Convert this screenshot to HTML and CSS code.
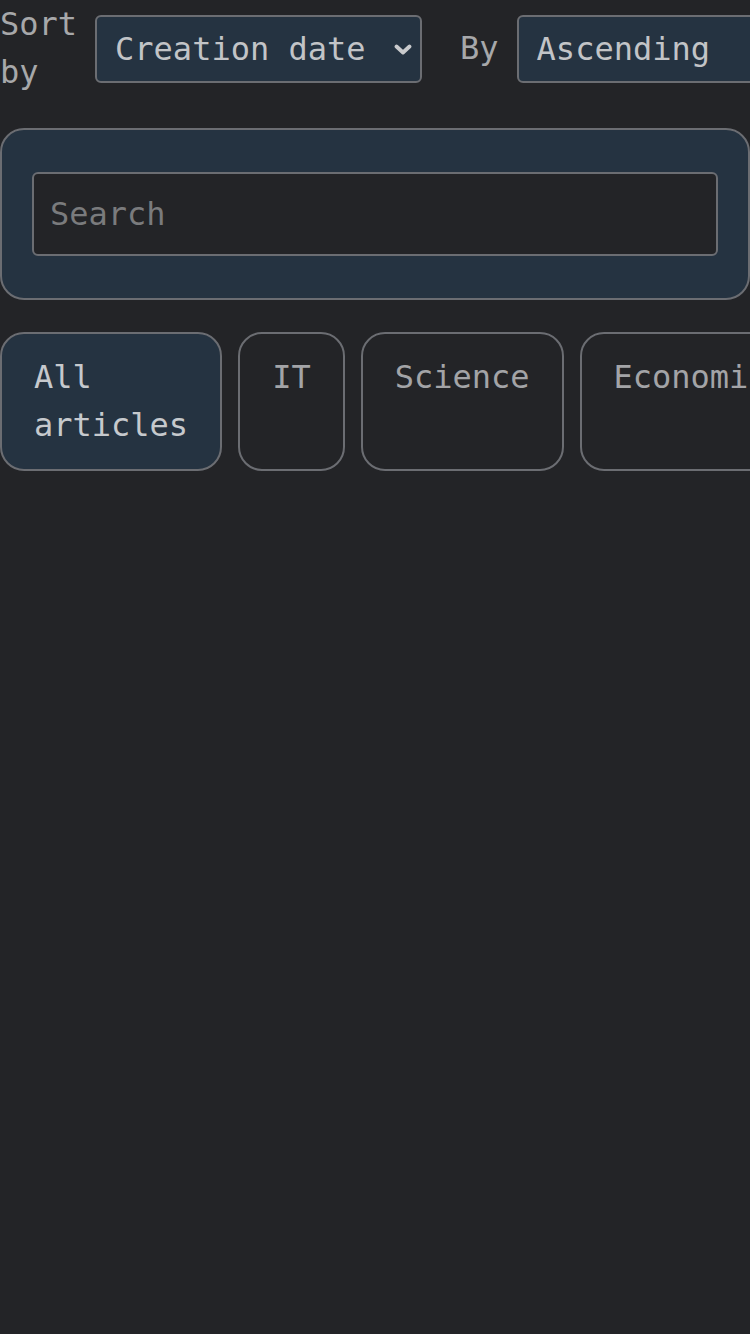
FILE: index.html
```html
<!DOCTYPE html>
<html lang="en">
<head>
<meta charset="utf-8">
<title>Articles</title>
<link rel="stylesheet" href="styles.css">
</head>
<body>
<main class="page">
  <div class="sort-row">
    <span class="sort-label">Sort by</span>
    <div class="select select-field">
      <span class="select-text">Creation date</span>
      <svg class="chevron" width="18" height="11" viewBox="0 0 18 11"><polyline points="2.5,2.5 9,8.5 15.5,2.5" fill="none" stroke="#c9cacc" stroke-width="3.8" stroke-linecap="round" stroke-linejoin="round"/></svg>
    </div>
    <span class="sort-label by-label">By</span>
    <div class="select select-order">
      <span class="select-text">Ascending</span>
      <svg class="chevron" width="18" height="11" viewBox="0 0 18 11"><polyline points="2.5,2.5 9,8.5 15.5,2.5" fill="none" stroke="#c9cacc" stroke-width="3.8" stroke-linecap="round" stroke-linejoin="round"/></svg>
    </div>
  </div>

  <section class="search-panel">
    <input class="search-input" type="text" placeholder="Search">
  </section>

  <nav class="tabs">
    <a class="tab tab-active" href="#">All articles</a>
    <a class="tab" href="#">IT</a>
    <a class="tab" href="#">Science</a>
    <a class="tab" href="#">Economics</a>
  </nav>
</main>
</body>
</html>
```
FILE: styles.css
```css
html, body {
  margin: 0;
  padding: 0;
  background: #232427;
}

body {
  font-family: "DejaVu Sans Mono", "Liberation Mono", monospace;
  font-size: 32px;
  line-height: 48px;
  color: #a9aaac;
}

.page {
  width: 750px;
  min-height: 1334px;
  overflow: hidden;
}

.sort-row {
  display: flex;
  align-items: center;
  gap: 18px;
}

.sort-label {
  color: #a7a8aa;
}

.by-label {
  margin-left: 20px;
}

.select {
  flex-shrink: 0;
  box-sizing: border-box;
  height: 68px;
  margin-top: 2px;
  display: flex;
  align-items: center;
  justify-content: space-between;
  padding: 0 8px 0 18px;
  background: #253341;
  border: 2px solid #6b6d72;
  border-radius: 6px;
  color: #c2c4c7;
}

.select-field {
  width: 327px;
}

.select-order {
  width: 272px;
}

.chevron {
  display: block;
  flex-shrink: 0;
}

.search-panel {
  margin-top: 32px;
  padding: 42px 30px;
  background: #253341;
  border: 2px solid #6b6d72;
  border-radius: 24px;
}

.search-input {
  display: block;
  box-sizing: border-box;
  width: 100%;
  height: 84px;
  margin: 0;
  padding: 0 16px;
  background: #232427;
  border: 2px solid #6b6d72;
  border-radius: 6px;
  font-family: "DejaVu Sans Mono", "Liberation Mono", monospace;
  font-size: 32px;
  color: #c2c4c7;
  outline: none;
}

.search-input::placeholder {
  color: #7a7b7d;
}

.tabs {
  margin-top: 32px;
  display: flex;
  gap: 16px;
}

.tab {
  display: block;
  padding: 19px 32px 20px;
  border: 2px solid #6b6d72;
  border-radius: 24px;
  color: #a3a4a7;
  text-decoration: none;
}

.tab-active {
  background: #253341;
  color: #c6c9cd;
}
```
